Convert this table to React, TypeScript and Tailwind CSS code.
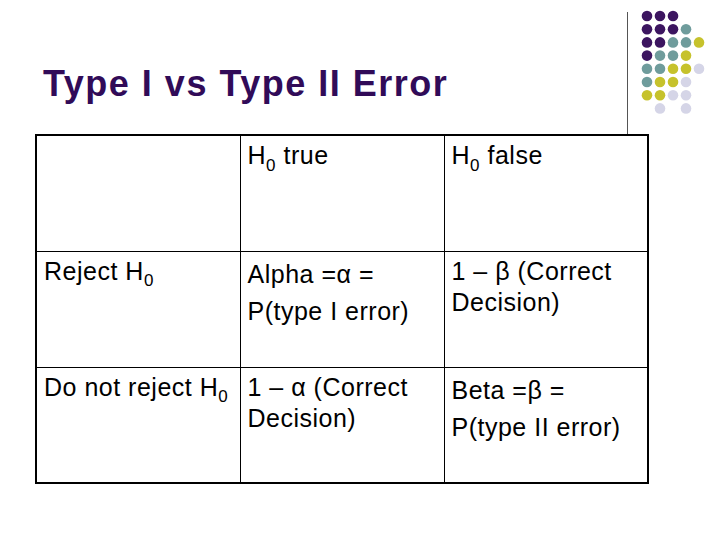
const PURPLE = "#3c1560";
const TEAL = "#6f9c9c";
const YELLOW = "#c6c22c";
const LAVENDER = "#d5d5e7";

// dot pattern in the top-right corner, one string per row
const DOT_ROWS = ["PPP..", "PPPT.", "PPTTY", "PTTY.", "TTYYL", "TYYL.", "YYLL.", ".L.L."];
const DOT_COLORS: Record<string, string> = { P: PURPLE, T: TEAL, Y: YELLOW, L: LAVENDER };

function DotLogo() {
  return (
    <svg width="70" height="120" viewBox="0 0 70 120" className="block">
      {DOT_ROWS.flatMap((row, r) =>
        row.split("").map((c, i) =>
          c === "." ? null : (
            <circle key={`${r}-${i}`} cx={7 + i * 13} cy={6 + r * 13.2} r={5.3} fill={DOT_COLORS[c]} />
          )
        )
      )}
    </svg>
  );
}

function H0() {
  return (
    <>
      H<sub className="text-[17px] bottom-[-0.4em]">0</sub>
    </>
  );
}

function Cell({ children, tall }: { children?: React.ReactNode; tall?: boolean }) {
  return (
    <td
      className={
        "border border-black align-top px-[7px] pt-[4px] w-[204px] h-[116px] " +
        (tall ? "leading-[37px]" : "leading-[31px]")
      }
    >
      {children}
    </td>
  );
}

export default function App() {
  return (
    <div
      className="relative w-[720px] h-[540px] bg-white overflow-hidden text-black"
      style={{ fontFamily: '"Liberation Sans", Arial, sans-serif' }}
    >
      <div className="absolute left-[627px] top-[12px] w-px h-[122px] bg-[#555]" />
      <div className="absolute left-[640px] top-[10px]">
        <DotLogo />
      </div>

      <h1 className="pt-[66px] pl-[43px] h-[101px] text-[36px] leading-[36px] font-bold tracking-[1.5px] text-[#310b58]">
        Type I vs Type II Error
      </h1>

      <table className="mt-[33px] ml-[35px] w-[614px] border-collapse border-[2.5px] border-black text-[25px] tracking-[0.5px]">
        <tbody>
          <tr>
            <Cell />
            <Cell>
              <H0 /> true
            </Cell>
            <Cell>
              <H0 /> false
            </Cell>
          </tr>
          <tr>
            <Cell>
              Reject <H0 />
            </Cell>
            <Cell tall>
              Alpha =α =
              <br />
              P(type I error)
            </Cell>
            <Cell>
              1 – β (Correct
              <br />
              Decision)
            </Cell>
          </tr>
          <tr>
            <Cell>
              Do not reject <H0 />
            </Cell>
            <Cell>
              1 – α (Correct
              <br />
              Decision)
            </Cell>
            <Cell tall>
              Beta =β =
              <br />
              P(type II error)
            </Cell>
          </tr>
        </tbody>
      </table>
    </div>
  );
}
